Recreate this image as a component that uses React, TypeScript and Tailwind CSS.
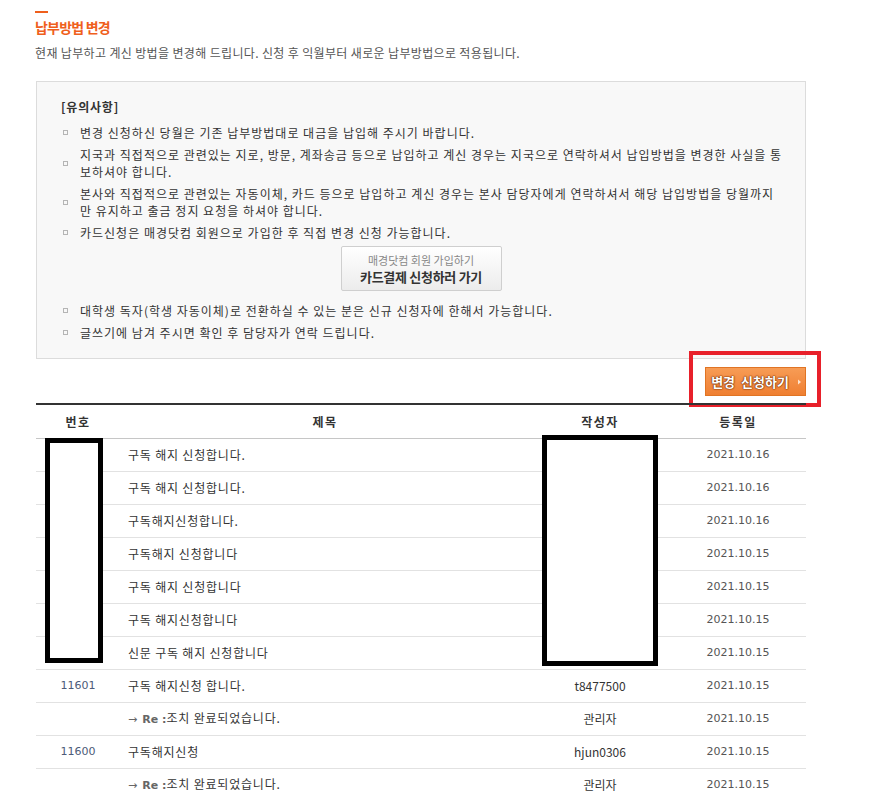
import React from 'react';

const KR = "font-['Noto_Sans_CJK_KR','Noto_Sans',sans-serif]";
const NUM = "font-['DejaVu_Sans','Noto_Sans_CJK_KR',sans-serif]";

type Row = { no: string; title: string; reply?: boolean; author: string; date: string };

const rows: Row[] = [
  { no: '', title: '구독 해지 신청합니다.', author: '', date: '2021.10.16' },
  { no: '', title: '구독 해지 신청합니다.', author: '', date: '2021.10.16' },
  { no: '', title: '구독해지신청합니다.', author: '', date: '2021.10.16' },
  { no: '', title: '구독해지 신청합니다', author: '', date: '2021.10.15' },
  { no: '', title: '구독 해지 신청합니다', author: '', date: '2021.10.15' },
  { no: '', title: '구독 해지신청합니다', author: '', date: '2021.10.15' },
  { no: '', title: '신문 구독 해지 신청합니다', author: '', date: '2021.10.15' },
  { no: '11601', title: '구독 해지신청 합니다.', author: 't8477500', date: '2021.10.15' },
  { no: '', title: '조치 완료되었습니다.', reply: true, author: '관리자', date: '2021.10.15' },
  { no: '11600', title: '구독해지신청', author: 'hjun0306', date: '2021.10.15' },
  { no: '', title: '조치 완료되었습니다.', reply: true, author: '관리자', date: '2021.10.15' },
];

const notices1 = [
  ['변경 신청하신 당월은 기존 납부방법대로 대금을 납입해 주시기 바랍니다.'],
  ['지국과 직접적으로 관련있는 지로, 방문, 계좌송금 등으로 납입하고 계신 경우는 지국으로 연락하셔서 납입방법을 변경한 사실을 통', '보하셔야 합니다.'],
  ['본사와 직접적으로 관련있는 자동이체, 카드 등으로 납입하고 계신 경우는 본사 담당자에게 연락하셔서 해당 납입방법을 당월까지', '만 유지하고 출금 정지 요청을 하셔야 합니다.'],
  ['카드신청은 매경닷컴 회원으로 가입한 후 직접 변경 신청 가능합니다.'],
];

const notices2 = [
  ['대학생 독자(학생 자동이체)로 전환하실 수 있는 분은 신규 신청자에 한해서 가능합니다.'],
  ['글쓰기에 남겨 주시면 확인 후 담당자가 연락 드립니다.'],
];

function Notice({ lines }: { lines: string[] }) {
  return (
    <li className="flex items-center py-[2px]">
      <span className="w-[5px] h-[5px] border border-[#b5b5b5] mr-[12px] shrink-0" />
      <div className="text-[12px] leading-[17px] text-[#333] tracking-[1px] whitespace-nowrap">
        {lines.map((l, i) => (
          <div key={i}>{l}</div>
        ))}
      </div>
    </li>
  );
}

export default function App() {
  return (
    <div className={`min-h-screen bg-white ${KR}`}>
      <div className="pl-[35px] pt-[11px] w-[806px]">
        {/* Title */}
        <div className="w-[13px] h-[2px] bg-[#ef5f1c]" />
        <h1 className="mt-[6px] text-[14px] leading-[16px] font-bold text-[#ef5f1c] tracking-[-0.8px]">납부방법 변경</h1>
        <p className="mt-[11px] text-[12px] leading-[14px] text-[#555] tracking-[0.35px]">
          현재 납부하고 계신 방법을 변경해 드립니다. 신청 후 익월부터 새로운 납부방법으로 적용됩니다.
        </p>

        {/* Notice box */}
        <div className="mt-[21px] ml-[1px] border border-[#dcdcdc] bg-[#f8f8f8] pl-[24px] pr-[10px] pt-[17px] pb-[15px]">
          <div className="text-[12px] leading-[16px] font-bold text-[#333] tracking-[0.8px]">[유의사항]</div>
          <ul className="mt-[7px] flex flex-col gap-[1px] ml-[2px]">
            {notices1.map((n, i) => (
              <Notice key={i} lines={n} />
            ))}
          </ul>
          <div className="flex justify-center mt-[3px] mb-[9px] -ml-[24px] -mr-[10px]">
            <button className="w-[161px] h-[45px] border border-[#cfcfcf] bg-gradient-to-b from-[#ffffff] to-[#ececec] flex flex-col items-center justify-center rounded-[2px]">
              <span className="text-[11px] leading-[15px] text-[#888]">매경닷컴 회원 가입하기</span>
              <span className="text-[13px] leading-[17px] font-bold text-[#333] tracking-[-0.3px]">카드결제 신청하러 가기</span>
            </button>
          </div>
          <ul className="flex flex-col gap-[1px] ml-[2px]">
            {notices2.map((n, i) => (
              <Notice key={i} lines={n} />
            ))}
          </ul>
        </div>

        {/* Change request button */}
        <div className="flex justify-end mt-[8px]">
          <div className="relative">
            <button className="h-[29px] w-[101px] border border-[#e07424] bg-gradient-to-b from-[#f79c55] to-[#ef7f31] flex items-center justify-center pl-[2px]">
              <span className="text-[13px] font-bold text-white tracking-[0px] [word-spacing:3px] [text-shadow:0_0_2px_#7a2e00,0_0_1px_#7a2e00,0_0_1px_#7a2e00]">변경 신청하기</span>
              <svg width="5" height="6" viewBox="0 0 5 6" className="ml-[8px]">
                <path d="M1 0.5 L4 3 L1 5.5 Z" fill="#fde3cf" />
              </svg>
            </button>
            <div className="absolute -left-[16px] -right-[15px] -top-[16px] -bottom-[11px] border-[4px] border-[#e8202a]" />
          </div>
        </div>

        {/* Board table */}
        <div className="relative mt-[7px] ml-[1px]">
          <div className="border-t-2 border-[#333]">
            <div className="grid grid-cols-[84px_410px_140px_1fr] h-[34px] items-center border-b border-[#c6c6c6] text-[12px] font-bold text-[#333] tracking-[1.5px] text-center">
              <div>번호</div>
              <div>제목</div>
              <div>작성자</div>
              <div>등록일</div>
            </div>
            {rows.map((r, i) => (
              <div
                key={i}
                className="grid grid-cols-[84px_410px_140px_1fr] h-[33px] items-center border-b border-[#e2e2e2] text-[12px] text-[#333]"
              >
                <div className={`text-center text-[11px] text-[#4d5b78] ${NUM}`}>{r.no}</div>
                <div className="pl-[8px] truncate tracking-[0.8px]">
                  {r.reply ? (
                    <span>
                      <span className={`text-[#666] text-[11px] ${NUM}`}>→ </span>
                      <span className={`font-bold text-[#666] text-[11px] tracking-[0px] ${NUM}`}>Re :</span>
                      조치 완료되었습니다.
                    </span>
                  ) : (
                    r.title
                  )}
                </div>
                <div className="text-center">{r.author}</div>
                <div className={`text-center text-[11px] text-[#555] ${NUM}`}>{r.date}</div>
              </div>
            ))}
          </div>
          {/* redaction boxes */}
          <div className="absolute left-[9px] top-[35px] w-[58px] h-[225px] bg-white border-[5px] border-black" />
          <div className="absolute left-[506px] top-[32px] w-[116px] h-[231px] bg-white border-[5px] border-black" />
        </div>
      </div>
    </div>
  );
}
